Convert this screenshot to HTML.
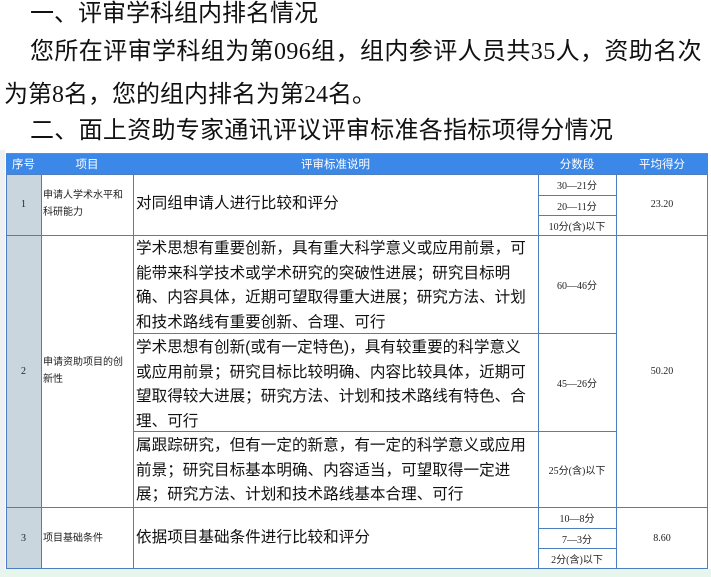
<!DOCTYPE html>
<html><head><meta charset="utf-8"><style>
body{margin:0;width:711px;height:577px;background:#fff;position:relative;overflow:hidden;font-family:"Liberation Serif","Noto Sans CJK SC",sans-serif;}
.t{position:absolute;white-space:nowrap;font-size:24px;color:#111;font-family:"Liberation Serif","Noto Sans CJK SC",sans-serif;line-height:28px}
.b{position:absolute;box-sizing:border-box}
.c{position:absolute;display:flex;align-items:center;justify-content:center;font-size:10px;color:#222;box-sizing:border-box}
.crit{position:absolute;left:136px;font-size:15.6px;line-height:24.5px;color:#111;font-family:"Liberation Sans","Noto Sans CJK SC",sans-serif;white-space:nowrap}
.proj{position:absolute;left:43px;font-size:10px;line-height:17px;color:#222;font-family:"Liberation Sans","Noto Sans CJK SC",sans-serif}
.h{position:absolute;top:154px;height:20px;display:flex;align-items:center;justify-content:center;color:#fff;font-size:11.5px;font-family:"Liberation Sans","Noto Sans CJK SC",sans-serif}
</style></head><body>
<div class="t" style="left:30px;top:0px">一、评审学科组内排名情况</div>
<div class="t" style="left:30px;top:38px;letter-spacing:0.4px">您所在评审学科组为第096组，组内参评人员共35人，资助名次</div>
<div class="t" style="left:4px;top:81px">为第8名，您的组内排名为第24名。</div>
<div class="t" style="left:30px;top:117px;letter-spacing:0.3px">二、面上资助专家通讯评议评审标准各指标项得分情况</div>
<div class="b" style="left:0;top:150px;width:5px;height:420px;background:#eef0f2"></div>
<div class="b" style="left:0;top:569px;width:711px;height:8px;background:#e6f6ec"></div>
<div class="b" style="left:6px;top:153px;width:702px;height:21px;background:#3b88e8;border-top:1px solid #5a8fd0"></div>
<div class="h" style="left:6px;width:35px">序号</div>
<div class="h" style="left:41px;width:92px">项目</div>
<div class="h" style="left:133px;width:405px">评审标准说明</div>
<div class="h" style="left:538px;width:78px">分数段</div>
<div class="h" style="left:616px;width:92px">平均得分</div>
<div class="b" style="left:6px;top:174px;width:35px;height:395px;background:#c9d6de"></div>
<div class="b" style="left:6px;top:174px;width:702px;height:395px;border:1px solid #4d7fc0"></div>
<div class="b" style="left:41px;top:174px;width:1px;height:395px;background:#4d7fc0"></div>
<div class="b" style="left:133px;top:174px;width:1px;height:395px;background:#4d7fc0"></div>
<div class="b" style="left:538px;top:174px;width:1px;height:395px;background:#4d7fc0"></div>
<div class="b" style="left:616px;top:174px;width:1px;height:395px;background:#4d7fc0"></div>
<div class="b" style="left:6px;top:235px;width:702px;height:1px;background:#4d7fc0"></div>
<div class="b" style="left:6px;top:507px;width:702px;height:1px;background:#4d7fc0"></div>
<div class="b" style="left:133px;top:333px;width:483px;height:1px;background:#4d7fc0"></div>
<div class="b" style="left:133px;top:431px;width:483px;height:1px;background:#4d7fc0"></div>
<div class="b" style="left:538px;top:195px;width:78px;height:1px;background:#4d7fc0"></div>
<div class="b" style="left:538px;top:215px;width:78px;height:1px;background:#4d7fc0"></div>
<div class="b" style="left:538px;top:528px;width:78px;height:1px;background:#4d7fc0"></div>
<div class="b" style="left:538px;top:548px;width:78px;height:1px;background:#4d7fc0"></div>
<div class="c" style="left:6px;top:174px;width:35px;height:61px">1</div>
<div class="proj" style="top:187px">申请人学术水平和<br>科研能力</div>
<div class="crit" style="top:192px">对同组申请人进行比较和评分</div>
<div class="c" style="left:538px;top:174px;width:78px;height:21px">30—21分</div>
<div class="c" style="left:538px;top:195px;width:78px;height:20px">20—11分</div>
<div class="c" style="left:538px;top:215px;width:78px;height:20px">10分(含)以下</div>
<div class="c" style="left:616px;top:174px;width:92px;height:61px">23.20</div>
<div class="c" style="left:6px;top:235px;width:35px;height:272px">2</div>
<div class="proj" style="top:354px">申请资助项目的创<br>新性</div>
<div class="crit" style="top:237px">学术思想有重要创新，具有重大科学意义或应用前景，可<br>能带来科学技术或学术研究的突破性进展；研究目标明<br>确、内容具体，近期可望取得重大进展；研究方法、计划<br>和技术路线有重要创新、合理、可行</div>
<div class="crit" style="top:336px">学术思想有创新(或有一定特色)，具有较重要的科学意义<br>或应用前景；研究目标比较明确、内容比较具体，近期可<br>望取得较大进展；研究方法、计划和技术路线有特色、合<br>理、可行</div>
<div class="crit" style="top:434px">属跟踪研究，但有一定的新意，有一定的科学意义或应用<br>前景；研究目标基本明确、内容适当，可望取得一定进<br>展；研究方法、计划和技术路线基本合理、可行</div>
<div class="c" style="left:538px;top:235px;width:78px;height:98px">60—46分</div>
<div class="c" style="left:538px;top:333px;width:78px;height:98px">45—26分</div>
<div class="c" style="left:538px;top:431px;width:78px;height:76px">25分(含)以下</div>
<div class="c" style="left:616px;top:235px;width:92px;height:272px">50.20</div>
<div class="c" style="left:6px;top:507px;width:35px;height:62px">3</div>
<div class="proj" style="top:530px">项目基础条件</div>
<div class="crit" style="top:526px">依据项目基础条件进行比较和评分</div>
<div class="c" style="left:538px;top:507px;width:78px;height:21px">10—8分</div>
<div class="c" style="left:538px;top:528px;width:78px;height:20px">7—3分</div>
<div class="c" style="left:538px;top:548px;width:78px;height:21px">2分(含)以下</div>
<div class="c" style="left:616px;top:507px;width:92px;height:62px">8.60</div>
</body></html>
